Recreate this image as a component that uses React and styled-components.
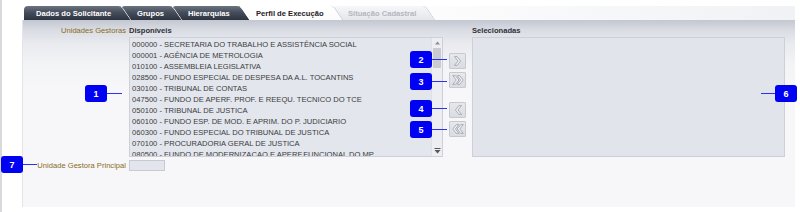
import React from "react";
import styled, { createGlobalStyle } from "styled-components";

const GlobalStyle = createGlobalStyle`
  html, body {
    margin: 0;
    padding: 0;
    background: #ffffff;
  }
  body {
    font-family: "Liberation Sans", Arial, sans-serif;
  }
`;

const unidades = [
  "000000 - SECRETARIA DO TRABALHO E ASSISTÊNCIA SOCIAL",
  "000001 - AGÊNCIA DE METROLOGIA",
  "010100 - ASSEMBLEIA LEGISLATIVA",
  "028500 - FUNDO ESPECIAL DE DESPESA DA A.L. TOCANTINS",
  "030100 - TRIBUNAL DE CONTAS",
  "047500 - FUNDO DE APERF. PROF. E REEQU. TECNICO DO TCE",
  "050100 - TRIBUNAL DE JUSTICA",
  "060100 - FUNDO ESP. DE MOD. E APRIM. DO P. JUDICIARIO",
  "060300 - FUNDO ESPECIAL DO TRIBUNAL DE JUSTICA",
  "070100 - PROCURADORIA GERAL DE JUSTICA",
  "080500 - FUNDO DE MODERNIZACAO E APERF.FUNCIONAL DO MP",
];

const tabs = [
  { label: "Dados do Solicitante", w: 97, pl: 12, kind: "dark" },
  { label: "Grupos", w: 51, pl: 16, kind: "dark" },
  { label: "Hierarquias", w: 68, pl: 16, kind: "dark" },
  { label: "Perfil de Execução", w: 93, pl: 16, kind: "active" },
  { label: "Situação Cadastral", w: 92, pl: 15, kind: "disabled" },
];

const markers = [
  { n: 1, x: 85, y: 85, len: 15 },
  { n: 2, x: 410, y: 51, len: 15 },
  { n: 3, x: 410, y: 73, len: 15 },
  { n: 4, x: 410, y: 100, len: 15 },
  { n: 5, x: 410, y: 121, len: 15 },
  { n: 6, x: 761, y: 85, len: 14, side: "left" },
  { n: 7, x: 1, y: 156, len: 14 },
];

const tabLook = {
  dark: {
    bg: "linear-gradient(180deg, #6c7482 0%, #464e5c 45%, #2e3440 100%)",
    color: "#ffffff",
    edge: "#ffffff",
  },
  active: {
    bg: "linear-gradient(180deg, #ffffff 0%, #fbfbfc 100%)",
    color: "#1f2226",
    edge: "#c5c9d0",
  },
  disabled: {
    bg: "linear-gradient(180deg, #f6f7f9 0%, #e4e6eb 100%)",
    color: "#b3b7bf",
    edge: "#c8ccd3",
  },
};

const Frame = styled.div`
  position: relative;
  width: 800px;
  height: 212px;
  overflow: hidden;
`;

const Page = styled.div`
  box-sizing: border-box;
  width: 800px;
  height: 212px;
  border-left: 2px solid #d8d9dc;
  padding: 6px 5px 0 20px;
  display: flex;
  flex-direction: column;
`;

const TabBar = styled.div`
  display: flex;
  height: 14px;
  padding-left: 2px;
  background: linear-gradient(90deg, #ffffff 0%, #ffffff 40%, #f1f2f5 100%);
`;

const Tab = styled.div`
  position: relative;
  z-index: ${(p) => p.$z};
  box-sizing: border-box;
  width: ${(p) => p.$w}px;
  height: 14px;
  padding-left: ${(p) => p.$pl}px;
  display: flex;
  align-items: center;
  white-space: nowrap;
  font-size: 7.6px;
  font-weight: bold;
  color: ${(p) => tabLook[p.$kind].color};
  background: ${(p) => tabLook[p.$kind].bg};
  border-top-left-radius: 4px;

  span {
    position: relative;
    z-index: 2;
  }

  &::after {
    content: "";
    position: absolute;
    top: 0;
    right: -1px;
    width: 12px;
    height: 14px;
    background: ${(p) => tabLook[p.$kind].bg};
    border-right: 1px solid ${(p) => tabLook[p.$kind].edge};
    border-top-right-radius: 4px;
    transform: skewX(34deg);
    transform-origin: top left;
  }
`;

const Panel = styled.div`
  box-sizing: border-box;
  width: 773px;
  height: 187px;
  border-left: 1px solid #e3e5ea;
  background: linear-gradient(
    180deg,
    #c3c7d0 0px,
    #d9dce3 10px,
    #e9ebef 24px,
    #f3f4f6 45px,
    #f7f7f9 70px,
    #f7f7f9 100%
  );
  padding-top: 4px;
  display: grid;
  grid-template-columns: 106px 314px 29px 313px;
  grid-template-rows: 13px 120px auto;
  font-size: 7.6px;
`;

const Label = styled.div`
  color: #8a6c22;
  text-align: right;
  padding-right: 3px;
  line-height: ${(p) => p.$lh || 13}px;
  white-space: nowrap;
`;

const Heading = styled.div`
  font-weight: bold;
  color: #2e3136;
  line-height: 13px;
`;

const ListBox = styled.div`
  box-sizing: border-box;
  height: 120px;
  display: flex;
  background: #e3e6ec;
  border: 1px solid #cdd0d6;
  overflow: hidden;
`;

const Items = styled.ul`
  flex: 1;
  list-style: none;
  margin: 0;
  padding: 1px 0 0 2px;
  overflow: hidden;

  li {
    height: 11px;
    line-height: 11px;
    color: #3a3c40;
    white-space: nowrap;
  }
`;

const Scrollbar = styled.div`
  width: 10px;
  display: flex;
  flex-direction: column;
  background: #eceef1;
  border-left: 1px solid #dde0e5;
`;

const Arrow = styled.div`
  height: 10px;
  display: flex;
  align-items: center;
  justify-content: center;
`;

const Track = styled.div`
  flex: 1;
  padding: 0 1px;
`;

const Thumb = styled.div`
  height: 20px;
  background: #c9cbd0;
  border-radius: 1px;
`;

const Buttons = styled.div`
  display: flex;
  flex-direction: column;
  gap: 14px;
  padding: 16px 0 0 6px;
`;

const ButtonGroup = styled.div`
  display: flex;
  flex-direction: column;
  gap: 3px;
`;

const MoveButton = styled.button`
  box-sizing: border-box;
  width: 17px;
  height: 16px;
  padding: 0;
  display: flex;
  align-items: center;
  justify-content: center;
  background: linear-gradient(180deg, #e6e8ec 0%, #d9dce2 100%);
  border: 1px solid #c6c9d0;
  border-radius: 1px;
`;

const SelectedBox = styled.div`
  box-sizing: border-box;
  height: 120px;
  background: #e1e4eb;
  border: 1px solid #cdd0d6;
`;

const SmallInput = styled.div`
  box-sizing: border-box;
  width: 36px;
  height: 11px;
  margin-top: 3px;
  background: #e2e5ec;
  border: 1px solid #c6cad1;
`;

const Marker = styled.div`
  position: absolute;
  left: ${(p) => p.$x}px;
  top: ${(p) => p.$y}px;
  display: flex;
  align-items: center;
  flex-direction: ${(p) => (p.$side === "left" ? "row-reverse" : "row")};
`;

const Badge = styled.span`
  width: 22px;
  height: 17px;
  display: flex;
  align-items: center;
  justify-content: center;
  background: #0000f2;
  border-radius: 3px;
  color: #ffffff;
  font-size: 9px;
  font-weight: bold;
`;

const Lead = styled.span`
  width: ${(p) => p.$len}px;
  height: 1px;
  background: #3030f0;
`;

const Chevrons = ({ dir = "right", double = false }) => {
  const one = "M4 3 L7 3 L11 8 L7 13 L4 13 L8 8 Z";
  const shift = double ? -2 : 0;
  const flip = dir === "left" ? "translate(16 0) scale(-1 1)" : undefined;
  return (
    <svg width="14" height="14" viewBox="0 0 16 16">
      <g transform={flip}>
        <path d={one} transform={`translate(${shift} 0)`} fill="#eef0f3" stroke="#9a9ea7" strokeWidth="0.9" strokeLinejoin="round" />
        {double && <path d={one} transform="translate(3 0)" fill="#eef0f3" stroke="#9a9ea7" strokeWidth="0.9" strokeLinejoin="round" />}
      </g>
    </svg>
  );
};

const ScrollArrow = ({ down }) => (
  <svg width="7" height="6" viewBox="0 0 7 6">
    {down ? (
      <>
        <rect x="0.5" y="0" width="6" height="1" fill="#55585e" />
        <path d="M0.5 2 L6.5 2 L3.5 5.5 Z" fill="#55585e" />
      </>
    ) : (
      <path d="M1 4.5 L6 4.5 L3.5 1.5 Z" fill="#8a8d93" />
    )}
  </svg>
);

export default function App() {
  return (
    <Frame>
      <GlobalStyle />
      <Page>
        <TabBar>
          {tabs.map((t, i) => (
            <Tab key={t.label} $w={t.w} $pl={t.pl} $kind={t.kind} $z={10 - i}>
              <span>{t.label}</span>
            </Tab>
          ))}
        </TabBar>
        <Panel>
          <Label>Unidades Gestoras</Label>
          <Heading>Disponíveis</Heading>
          <div />
          <Heading>Selecionadas</Heading>

          <div />
          <ListBox>
            <Items>
              {unidades.map((u) => (
                <li key={u}>{u}</li>
              ))}
            </Items>
            <Scrollbar>
              <Arrow>
                <ScrollArrow />
              </Arrow>
              <Track>
                <Thumb />
              </Track>
              <Arrow>
                <ScrollArrow down />
              </Arrow>
            </Scrollbar>
          </ListBox>
          <Buttons>
            <ButtonGroup>
              <MoveButton>
                <Chevrons dir="right" />
              </MoveButton>
              <MoveButton>
                <Chevrons dir="right" double />
              </MoveButton>
            </ButtonGroup>
            <ButtonGroup>
              <MoveButton>
                <Chevrons dir="left" />
              </MoveButton>
              <MoveButton>
                <Chevrons dir="left" double />
              </MoveButton>
            </ButtonGroup>
          </Buttons>
          <SelectedBox />

          <Label $lh={17}>Unidade Gestora Principal</Label>
          <div>
            <SmallInput />
          </div>
        </Panel>
      </Page>
      {markers.map((m) => (
        <Marker key={m.n} $x={m.x} $y={m.y} $side={m.side}>
          <Badge>{m.n}</Badge>
          <Lead $len={m.len} />
        </Marker>
      ))}
    </Frame>
  );
}
